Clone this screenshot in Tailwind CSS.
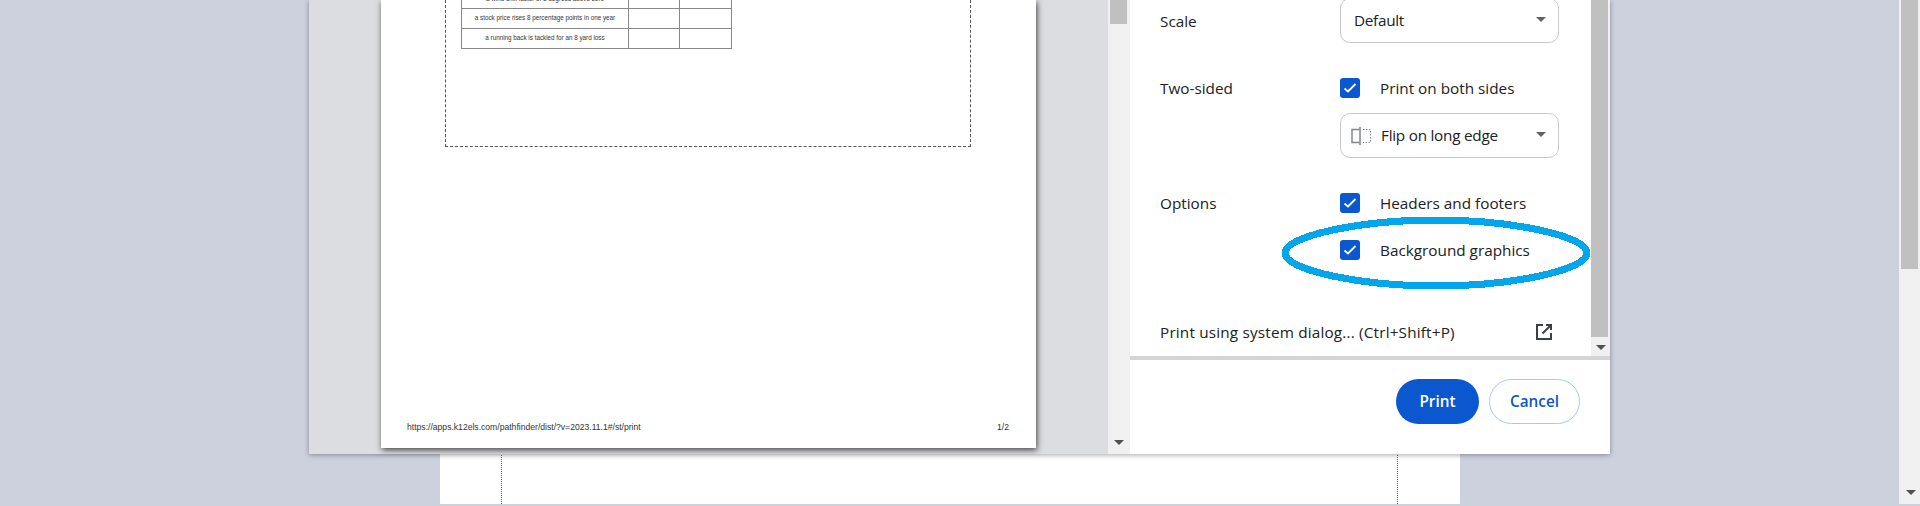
<!DOCTYPE html>
<html lang="en">
<head>
    <meta charset="UTF-8">
    <meta name="viewport" content="width=device-width, initial-scale=1.0">
    <title>Print</title>
    <script src="https://cdn.jsdelivr.net/npm/@tailwindcss/browser@4"></script>
</head>
<body class="relative h-[506px] overflow-hidden bg-[#cdd1de] font-['Open_Sans','Noto_Sans',sans-serif]">

    <!-- page behind the dialog -->
    <div class="ml-[440px] flex h-[504px] w-[1020px] justify-between bg-white pl-[61px] pr-[62px]">
        <div class="border-l border-dotted border-[#666]"></div>
        <div class="border-l border-dotted border-[#666]"></div>
    </div>

    <!-- page scrollbar -->
    <div class="absolute right-0 top-0 flex h-[504px] w-[21px] flex-col bg-[#f0f0f0] pl-[2px] pr-[2px]">
        <div class="h-[269px] w-[17px] bg-[#c0c0c0]"></div>
        <div class="mt-auto mb-[9px] ml-[5px] h-0 w-0 border-x-[5px] border-t-[5px] border-x-transparent border-t-[#505050]"></div>
    </div>

    <!-- print dialog -->
    <div class="absolute left-[309px] top-0 flex h-[454px] w-[1301px] bg-white shadow-[0_1px_5px_rgba(0,0,0,0.35)]">

        <!-- preview pane -->
        <div class="h-full w-[799px] bg-[#dcdde0] pl-[72px]">
            <div class="flex h-[448px] w-[655px] flex-col bg-white pl-[26px] pr-[26px] shadow-[1px_2px_6px_rgba(0,0,0,0.7)] font-['Liberation_Sans',sans-serif] text-[#333]">
                <div class="ml-[38px] h-[147px] w-[526px] border-x border-b border-dashed border-[#555] pl-[16px]">
                    <table class="-ml-[1px] w-[270px] table-fixed border-collapse text-center text-[6.3px] leading-none whitespace-nowrap">
                        <colgroup>
                            <col class="w-[167px]">
                            <col class="w-[51px]">
                            <col class="w-[52px]">
                        </colgroup>
                        <tr class="h-[8px]">
                            <td class="overflow-hidden border-x border-b border-[#888]"><div class="-mt-[3px] h-[5px] overflow-hidden"><div class="-mt-[4px]">a wind chill factor of 8 degrees above zero</div></div></td>
                            <td class="border-x border-b border-[#888]"></td>
                            <td class="border-x border-b border-[#888]"></td>
                        </tr>
                        <tr class="h-[20px]">
                            <td class="border border-[#888]">a stock price rises 8 percentage points in one year</td>
                            <td class="border border-[#888]"></td>
                            <td class="border border-[#888]"></td>
                        </tr>
                        <tr class="h-[20px]">
                            <td class="border border-[#888]">a running back is tackled for an 8 yard loss</td>
                            <td class="border border-[#888]"></td>
                            <td class="border border-[#888]"></td>
                        </tr>
                    </table>
                </div>
                <div class="mt-auto mb-[16px] flex justify-between pr-[1px] text-[8.6px] leading-[10px]">
                    <span>https://apps.k12els.com/pathfinder/dist/?v=2023.11.1#/st/print</span>
                    <span>1/2</span>
                </div>
            </div>
        </div>

        <!-- preview scrollbar -->
        <div class="flex h-full w-[22px] flex-col bg-[#f0f0f0] pl-[2px]">
            <div class="h-[24px] w-[17px] bg-[#c0c0c0]"></div>
            <div class="mt-auto mb-[9px] ml-[4px] h-0 w-0 border-x-[5px] border-t-[5px] border-x-transparent border-t-[#505050]"></div>
        </div>

        <!-- settings sidebar -->
        <div class="flex h-full w-[480px] flex-col">
            <div class="flex h-[360px] border-b-[4px] border-[#d4d4d4]">
                <div class="w-[461px] overflow-hidden pl-[30px] text-[15.3px] text-[#202124]">
                    <div class="flex h-[43px] items-center">
                        <div class="w-[180px]">Scale</div>
                        <div class="-mt-[2px] flex h-[45px] w-[219px] items-center justify-between rounded-[10px] border border-[#c8c8c8] pl-[13px] pr-[12px]">
                            <span class="tracking-[-0.3px]">Default</span>
                            <div class="-mt-[3px] h-0 w-0 border-x-[5px] border-t-[5px] border-x-transparent border-t-[#5f6368]"></div>
                        </div>
                    </div>
                    <div class="mt-[35px] flex">
                        <div class="w-[180px] leading-[20px]">Two-sided</div>
                        <div>
                            <div class="flex h-[20px] items-center">
                                <div class="flex h-[20px] w-[20px] items-center justify-center rounded-[3px] bg-[#0b57d0]">
                                    <svg width="14" height="14" viewBox="0 0 14 14" fill="none" stroke="white" stroke-width="1.8"><path d="M1.5 7.5 L5 10.5 L12.5 3"/></svg>
                                </div>
                                <span class="ml-[20px]">Print on both sides</span>
                            </div>
                            <div class="mt-[15px] flex h-[45px] w-[219px] items-center rounded-[10px] border border-[#c8c8c8] pl-[10px] pr-[12px]">
                                <svg width="20" height="18" viewBox="0 0 20 18" fill="none" stroke="#80868b" class="shrink-0">
                                    <path d="M8.5 2.5 H1 V15.5 H8.5" stroke-width="1.5"/>
                                    <path d="M9 0 V18" stroke-width="1.5"/>
                                    <path d="M12 2.5 H19.5 V15.5 H12" stroke-width="1" stroke-dasharray="1.5 1.5"/>
                                </svg>
                                <span class="ml-[10px] tracking-[-0.25px]">Flip on long edge</span>
                                <div class="-mt-[3px] ml-auto h-0 w-0 border-x-[5px] border-t-[5px] border-x-transparent border-t-[#5f6368]"></div>
                            </div>
                        </div>
                    </div>
                    <div class="mt-[35px] flex">
                        <div class="w-[180px] leading-[20px]">Options</div>
                        <div>
                            <div class="flex h-[20px] items-center">
                                <div class="flex h-[20px] w-[20px] items-center justify-center rounded-[3px] bg-[#0b57d0]">
                                    <svg width="14" height="14" viewBox="0 0 14 14" fill="none" stroke="white" stroke-width="1.8"><path d="M1.5 7.5 L5 10.5 L12.5 3"/></svg>
                                </div>
                                <span class="ml-[20px]">Headers and footers</span>
                            </div>
                            <div class="mt-[27px] flex h-[20px] items-center">
                                <div class="flex h-[20px] w-[20px] items-center justify-center rounded-[3px] bg-[#0b57d0]">
                                    <svg width="14" height="14" viewBox="0 0 14 14" fill="none" stroke="white" stroke-width="1.8"><path d="M1.5 7.5 L5 10.5 L12.5 3"/></svg>
                                </div>
                                <span class="ml-[20px]">Background graphics</span>
                            </div>
                        </div>
                    </div>
                    <div class="mt-[62px] flex h-[20px] items-center justify-between pr-[38px]">
                        <span class="tracking-[0.18px]">Print using system dialog... (Ctrl+Shift+P)</span>
                        <svg width="18" height="18" viewBox="0 0 18 18" fill="none" stroke="#3c4043" stroke-width="2">
                            <path d="M8 2 H2 V16 H16 V10"/>
                            <path d="M11 2 H16 V7"/>
                            <path d="M16 2 L7.5 10.5"/>
                        </svg>
                    </div>
                </div>
                <div class="flex w-[19px] flex-col bg-[#f0f0f0]">
                    <div class="h-[337px] w-[17px] bg-[#c0c0c0]"></div>
                    <div class="mt-auto mb-[6px] ml-[5px] h-0 w-0 border-x-[5px] border-t-[5px] border-x-transparent border-t-[#505050]"></div>
                </div>
            </div>
            <div class="flex flex-1 items-start justify-end gap-[10px] pr-[30px] pt-[19px] text-[15.3px] font-semibold">
                <button class="h-[45px] w-[83px] rounded-full bg-[#0b57d0] text-white">Print</button>
                <button class="h-[45px] w-[91px] rounded-full border border-[#a8c7fa] bg-white text-[#0b57d0]">Cancel</button>
            </div>
        </div>
    </div>

    <!-- hand drawn oval over the screenshot -->
    <svg class="absolute left-[1280px] top-[214px]" width="312" height="78" viewBox="0 0 312 78" fill="none" shape-rendering="crispEdges">
        <path d="M5 39 C5 22 80 6 156 6 C232 6 307 22 307 39 C307 56 232 72 156 72 C80 72 5 56 5 39 Z" stroke="#03a6ea" stroke-width="7"/>
    </svg>
</body>
</html>
